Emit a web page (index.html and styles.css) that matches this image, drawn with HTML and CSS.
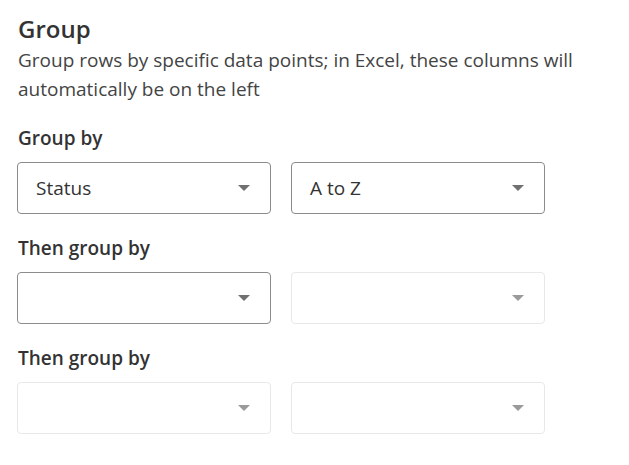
FILE: index.html
```html
<!DOCTYPE html>
<html lang="en">
<head>
  <meta charset="UTF-8" />
  <title>Group</title>
  <link rel="stylesheet" href="styles.css">
</head>
<body>
  <div class="panel">
    <h2 class="panel-title">Group</h2>
    <p class="panel-desc">Group rows by specific data points; in Excel, these columns will automatically be on the left</p>

    <div class="group-row">
      <div class="group-label">Group by</div>
      <div class="select-pair">
        <div class="select"><span>Status</span><span class="caret"></span></div>
        <div class="select"><span>A to Z</span><span class="caret"></span></div>
      </div>
    </div>

    <div class="group-row">
      <div class="group-label">Then group by</div>
      <div class="select-pair">
        <div class="select"><span></span><span class="caret"></span></div>
        <div class="select disabled"><span></span><span class="caret"></span></div>
      </div>
    </div>

    <div class="group-row">
      <div class="group-label">Then group by</div>
      <div class="select-pair">
        <div class="select disabled"><span></span><span class="caret"></span></div>
        <div class="select disabled"><span></span><span class="caret"></span></div>
      </div>
    </div>
  </div>
</body>
</html>
```

FILE: styles.css
```css
body {
  margin: 0;
  font-family: 'Open Sans', sans-serif;
  background-color: #ffffff;
  color: #444444;
}

.panel {
  padding: 14px 18px 0 18px;
}

.panel-title {
  margin: 0 0 2px 0;
  font-size: 24px;
  font-weight: 600;
  color: #333333;
  line-height: 30px;
}

.panel-desc {
  margin: 0 0 21px 0;
  max-width: 580px;
  font-size: 19px;
  line-height: 29px;
  color: #444444;
}

.group-row {
  margin-bottom: 21px;
}

.group-label {
  font-size: 19px;
  font-weight: 600;
  color: #333333;
  line-height: 26px;
  margin-bottom: 11px;
}

.select-pair {
  display: flex;
  gap: 20px;
  width: 528px;
  margin-left: -1px;
}

.select {
  flex: 1;
  height: 52px;
  box-sizing: border-box;
  border: 1px solid #8c8c8c;
  border-radius: 4px;
  display: flex;
  align-items: center;
  justify-content: space-between;
  padding: 0 20px 0 18px;
  font-size: 19px;
  color: #333333;
}

.select.disabled {
  border-color: #e8e8e8;
}

.caret {
  width: 0;
  height: 0;
  border-left: 6px solid transparent;
  border-right: 6px solid transparent;
  border-top: 6px solid #707070;
}

.select.disabled .caret {
  border-top-color: #9a9a9a;
}
```
